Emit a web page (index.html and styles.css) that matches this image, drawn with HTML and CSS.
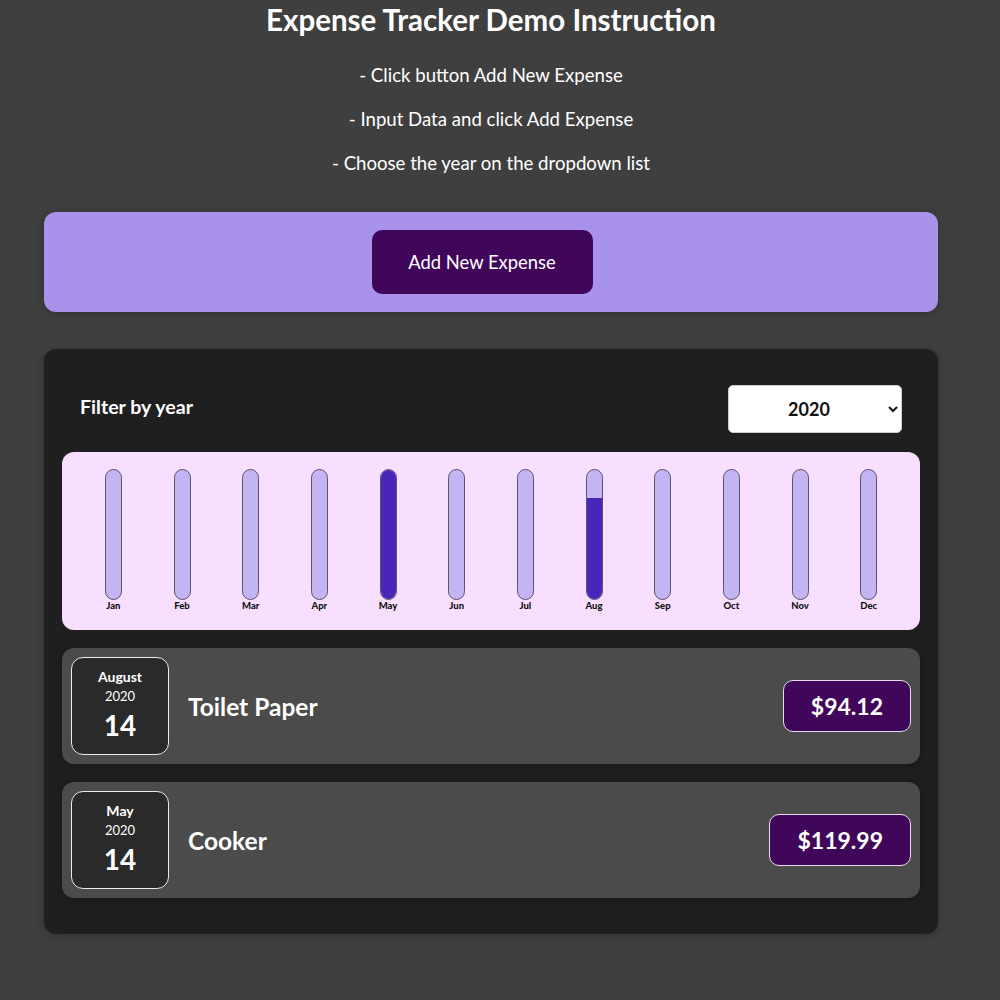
FILE: index.html
```html
<!DOCTYPE html>
<html>
<head>
<meta charset="utf-8">
<link rel="stylesheet" href="styles.css">
</head>
<body>
<header class="intro">
  <h1 class="intro-title">Expense Tracker Demo Instruction</h1>
  <p class="intro-line">- Click button Add New Expense</p>
  <p class="intro-line">- Input Data and click Add Expense</p>
  <p class="intro-line">- Choose the year on the dropdown list</p>
</header>

<section class="new-expense">
  <button class="new-expense-btn">Add New Expense</button>
</section>

<section class="expenses">
  <div class="filter">
    <span class="filter-label">Filter by year</span>
    <select class="filter-select">
      <option>2020</option>
    </select>
  </div>

  <div class="chart">
    <div class="chart-bar"><div class="bar-inner"><div class="bar-fill" style="height:0%"></div></div><span class="bar-label">Jan</span></div>
    <div class="chart-bar"><div class="bar-inner"><div class="bar-fill" style="height:0%"></div></div><span class="bar-label">Feb</span></div>
    <div class="chart-bar"><div class="bar-inner"><div class="bar-fill" style="height:0%"></div></div><span class="bar-label">Mar</span></div>
    <div class="chart-bar"><div class="bar-inner"><div class="bar-fill" style="height:0%"></div></div><span class="bar-label">Apr</span></div>
    <div class="chart-bar"><div class="bar-inner"><div class="bar-fill" style="height:100%"></div></div><span class="bar-label">May</span></div>
    <div class="chart-bar"><div class="bar-inner"><div class="bar-fill" style="height:0%"></div></div><span class="bar-label">Jun</span></div>
    <div class="chart-bar"><div class="bar-inner"><div class="bar-fill" style="height:0%"></div></div><span class="bar-label">Jul</span></div>
    <div class="chart-bar"><div class="bar-inner"><div class="bar-fill" style="height:78.4%"></div></div><span class="bar-label">Aug</span></div>
    <div class="chart-bar"><div class="bar-inner"><div class="bar-fill" style="height:0%"></div></div><span class="bar-label">Sep</span></div>
    <div class="chart-bar"><div class="bar-inner"><div class="bar-fill" style="height:0%"></div></div><span class="bar-label">Oct</span></div>
    <div class="chart-bar"><div class="bar-inner"><div class="bar-fill" style="height:0%"></div></div><span class="bar-label">Nov</span></div>
    <div class="chart-bar"><div class="bar-inner"><div class="bar-fill" style="height:0%"></div></div><span class="bar-label">Dec</span></div>
  </div>

  <ul class="expense-list">
    <li class="expense-item">
      <div class="expense-date">
        <div class="date-month">August</div>
        <div class="date-year">2020</div>
        <div class="date-day">14</div>
      </div>
      <div class="expense-desc">
        <h2 class="expense-title">Toilet Paper</h2>
        <div class="expense-price">$94.12</div>
      </div>
    </li>
    <li class="expense-item">
      <div class="expense-date">
        <div class="date-month">May</div>
        <div class="date-year">2020</div>
        <div class="date-day">14</div>
      </div>
      <div class="expense-desc">
        <h2 class="expense-title">Cooker</h2>
        <div class="expense-price">$119.99</div>
      </div>
    </li>
  </ul>
</section>
</body>
</html>
```
FILE: styles.css
```css
* { box-sizing: border-box; }

body {
  margin: 0;
  background: #3f3f3f;
  font-family: "Lato", "Open Sans", sans-serif;
  color: #fff;
  padding-bottom: 40px;
}

.intro {
  text-align: center;
  padding-top: 1px;
}

.intro-title {
  margin: 0;
  font-size: 29.5px;
  font-weight: 700;
  line-height: 38px;
  margin-left: -18px;
}

.intro-line {
  margin: 0;
  margin-top: 8px;
  font-size: 18.6px;
  line-height: 36px;
  margin-left: -18px;
}

.intro-line:first-of-type { margin-top: 18px; }

.new-expense {
  margin: 31px 62px 0 44px;
  background: #a892ec;
  border-radius: 12px;
  height: 100px;
  display: flex;
  justify-content: center;
  align-items: center;
  box-shadow: 0 1px 8px rgba(0,0,0,0.25);
}

.new-expense-btn {
  font-family: inherit;
  font-size: 18.4px;
  color: #fff;
  background: #40065a;
  border: none;
  border-radius: 10px;
  width: 221px;
  height: 64px;
  margin-right: 18px;
}

.expenses {
  margin: 37px 62px 0 44px;
  background: #1f1f1f;
  border-radius: 12px;
  padding: 36px 18px 36px 18px;
  box-shadow: 0 1px 8px rgba(0,0,0,0.25);
}

.filter {
  display: flex;
  justify-content: space-between;
  align-items: center;
  padding: 0 18px 0 18px;
}

.filter-label {
  font-weight: 700;
  font-size: 19.6px;
  padding-bottom: 6px;
}

.filter-select {
  width: 174px;
  height: 48px;
  font-family: inherit;
  font-weight: 700;
  font-size: 18px;
  text-align: center;
  text-align-last: center;
  border-radius: 5px;
  border: 1px solid #ccc;
  background: #fff;
  color: #111;
}

.chart {
  margin-top: 19px;
  background: #f8dfff;
  border-radius: 12px;
  padding: 17px 17px 17px 17px;
  height: 178px;
  display: flex;
  justify-content: space-around;
}

.chart-bar {
  flex: 1;
  display: flex;
  flex-direction: column;
  align-items: center;
}

.bar-inner {
  width: 17px;
  height: 131px;
  border: 1px solid #5d5466;
  border-radius: 12px;
  background: #c3b4f3;
  overflow: hidden;
  display: flex;
  flex-direction: column;
  justify-content: flex-end;
}

.bar-fill {
  background: #4826b9;
  width: 100%;
}

.bar-label {
  margin-top: 0;
  font-size: 9.5px;
  font-weight: 900;
  color: #111;
}

.expense-list {
  list-style: none;
  margin: 18px 0 0 0;
  padding: 0;
  display: flex;
  flex-direction: column;
  gap: 18px;
}

.expense-item {
  background: #4b4b4b;
  border-radius: 12px;
  padding: 9px;
  display: flex;
  align-items: center;
  gap: 19px;
  box-shadow: 0 1px 8px rgba(0,0,0,0.25);
}

.expense-date {
  width: 98px;
  height: 98px;
  background: #2a2a2a;
  border: 1px solid #ececec;
  border-radius: 12px;
  display: flex;
  flex-direction: column;
  align-items: center;
  justify-content: center;
  color: #fff;
}

.date-month {
  font-size: 14px;
  font-weight: 700;
  line-height: 20px;
}

.date-year {
  font-size: 13px;
  line-height: 18px;
}

.date-day {
  font-size: 28px;
  font-weight: 700;
  line-height: 40px;
}

.expense-desc {
  flex: 1;
  display: flex;
  justify-content: space-between;
  align-items: center;
}

.expense-title {
  margin: 0;
  font-size: 24.5px;
  font-weight: 700;
  color: #fff;
}

.expense-price {
  background: #40065a;
  border: 1px solid #e6dcef;
  border-radius: 10px;
  font-size: 23px;
  font-weight: 700;
  padding: 0 27px;
  height: 52px;
  line-height: 50px;
  color: #fff;
}
```
